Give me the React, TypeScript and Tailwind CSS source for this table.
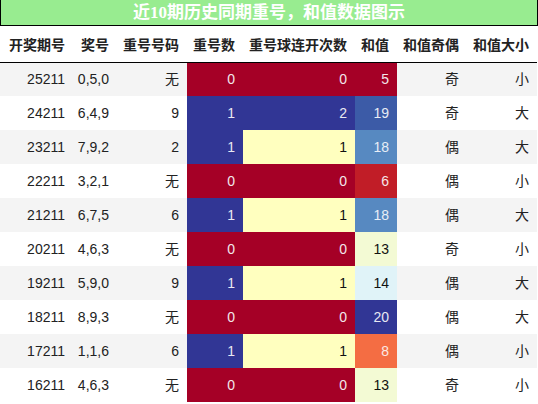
import React from "react";

type Cell = { v: string; cls: string };

const RED = "bg-[#a50026] text-[#f2e6ea]";
const BLUE = "bg-[#313695] text-[#e8e8f2]";
const YEL = "bg-[#ffffbf] text-[#111]";

const rows = [
  { q: "25211", j: "0,5,0", c: "无", n: 0, k: 0, s: 5, sCls: "bg-[#a50026] text-[#f2e6ea]", oe: "奇", bs: "小" },
  { q: "24211", j: "6,4,9", c: "9", n: 1, k: 2, s: 19, sCls: "bg-[#3c5ba7] text-[#e8ecf4]", oe: "奇", bs: "大" },
  { q: "23211", j: "7,9,2", c: "2", n: 1, k: 1, s: 18, sCls: "bg-[#5789c1] text-[#e8eef6]", oe: "偶", bs: "大" },
  { q: "22211", j: "3,2,1", c: "无", n: 0, k: 0, s: 6, sCls: "bg-[#c11d27] text-[#f6e6e8]", oe: "偶", bs: "小" },
  { q: "21211", j: "6,7,5", c: "6", n: 1, k: 1, s: 18, sCls: "bg-[#5789c1] text-[#e8eef6]", oe: "偶", bs: "大" },
  { q: "20211", j: "4,6,3", c: "无", n: 0, k: 0, s: 13, sCls: "bg-[#f3fad4] text-[#111]", oe: "奇", bs: "小" },
  { q: "19211", j: "5,9,0", c: "9", n: 1, k: 1, s: 14, sCls: "bg-[#e0f3f8] text-[#111]", oe: "偶", bs: "大" },
  { q: "18211", j: "8,9,3", c: "无", n: 0, k: 0, s: 20, sCls: "bg-[#313695] text-[#e8e8f2]", oe: "偶", bs: "大" },
  { q: "17211", j: "1,1,6", c: "6", n: 1, k: 1, s: 8, sCls: "bg-[#f46d43] text-[#fbe8e2]", oe: "偶", bs: "小" },
  { q: "16211", j: "4,6,3", c: "无", n: 0, k: 0, s: 13, sCls: "bg-[#f3fad4] text-[#111]", oe: "奇", bs: "小" },
];

const headers = ["开奖期号", "奖号", "重号号码", "重号数", "重号球连开次数", "和值", "和值奇偶", "和值大小"];
const colCls = ["w-[73px]", "w-[44px]", "w-[70px]", "w-[56px]", "w-[112px]", "w-[42px]", "w-[70px]", "w-[70px]"];

function kCls(k: number): string {
  if (k === 0) return RED;
  if (k === 2) return BLUE;
  return YEL;
}

export default function App() {
  return (
    <div className="w-[538px] h-[404px] bg-white overflow-hidden font-['Liberation_Sans','Noto_Sans_CJK_SC',sans-serif]">
      <div className="h-[26px] w-[538px] bg-[#98ec90] border-l border-r border-b border-black flex items-center justify-center text-white font-bold text-[17px] leading-none font-['Liberation_Serif','Noto_Sans_CJK_SC',serif]">
        近10期历史同期重号，和值数据图示
      </div>
      <table className="table-fixed border-collapse w-[537px] mt-px">
        <colgroup>
          {colCls.map((w, i) => (
            <col key={i} className={w} />
          ))}
        </colgroup>
        <thead>
          <tr className="h-[35px] border-b border-black">
            {headers.map((h, i) => (
              <th
                key={i}
                className="p-0 pr-2 text-right text-[14px] font-bold text-[#222] whitespace-nowrap font-['Noto_Sans_CJK_SC',sans-serif]"
              >
                {h}
              </th>
            ))}
          </tr>
        </thead>
        <tbody>
          {rows.map((r, i) => {
            const cells: Cell[] = [
              { v: r.q, cls: "text-[#222]" },
              { v: r.j, cls: "text-[#222]" },
              { v: r.c, cls: "text-[#222]" },
              { v: String(r.n), cls: r.n === 0 ? RED : BLUE },
              { v: String(r.k), cls: kCls(r.k) },
              { v: String(r.s), cls: r.sCls },
              { v: r.oe, cls: "text-[#222]" },
              { v: r.bs, cls: "text-[#222]" },
            ];
            return (
              <tr key={i} className={i % 2 === 0 ? "h-[34px] bg-[#f4f4f4]" : "h-[34px] bg-white"}>
                {cells.map((c, j) => (
                  <td key={j} className={`p-0 pr-2 text-right text-[14px] whitespace-nowrap ${c.cls}`}>
                    {c.v}
                  </td>
                ))}
              </tr>
            );
          })}
        </tbody>
      </table>
    </div>
  );
}
